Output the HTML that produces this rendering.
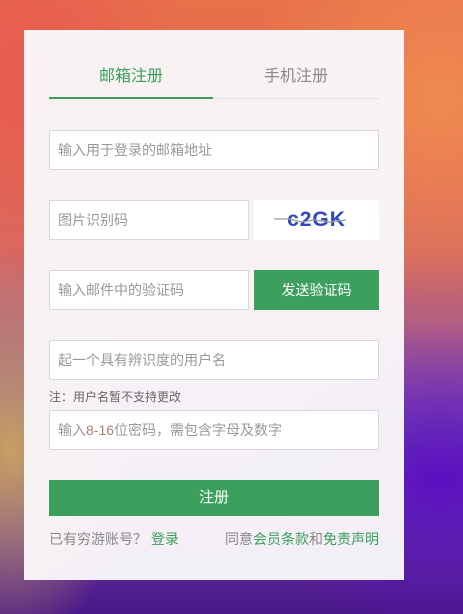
<!DOCTYPE html><html><head><meta charset="utf-8"><style>
*{margin:0;padding:0;box-sizing:border-box}
body{width:463px;height:614px;overflow:hidden;position:relative;font-family:"Liberation Sans","Noto Sans CJK SC",sans-serif;
background:
radial-gradient(ellipse 200px 160px at 440px 480px,#5a10c0 0%,rgba(90,16,192,0) 100%),
radial-gradient(ellipse 160px 200px at 30px 80px,#e85a50 0%,rgba(232,90,80,0) 100%),
radial-gradient(ellipse 200px 200px at 440px 100px,#f08a50 0%,rgba(240,138,80,0) 100%),
radial-gradient(ellipse 120px 200px at 10px 450px,#c8a060 0%,rgba(200,160,96,0) 100%),
linear-gradient(180deg,#e8704a 0%,#d86a60 40%,#8050b0 70%,#4a1888 100%);}
.p{position:absolute;left:24px;top:30px;width:380px;height:550px;background:rgba(250,248,250,.96)}
.t{position:absolute;top:62px;font-size:16px}
.line{position:absolute;left:49px;top:98px;width:330px;height:1px;background:#e4e4e4}
.act{position:absolute;left:49px;top:97px;width:164px;height:2px;background:#3a9e5a}
.in{position:absolute;left:49px;width:330px;height:40px;border:1px solid #d8d8d8;background:#fff;font-size:14px;color:#999;padding-left:8px;line-height:38px}
.btn{position:absolute;background:#3d9f5e;color:#fff;font-size:14px;text-align:center}
.g{color:#3a9e5a}
</style></head><body>
<div class="p"></div>
<div class="t g" style="left:99px">邮箱注册</div>
<div class="t" style="left:264px;color:#888">手机注册</div>
<div class="line"></div><div class="act"></div>
<div class="in" style="top:130px">输入用于登录的邮箱地址</div>
<div class="in" style="top:200px;width:200px">图片识别码</div>
<div style="position:absolute;left:254px;top:200px;width:125px;height:40px;background:#fff;font:bold 21px 'Liberation Sans',sans-serif;color:#3048c0;text-align:center;line-height:40px;letter-spacing:1px">c2GK
<svg style="position:absolute;left:0;top:0" width="125" height="40"><path d="M20 19 L35 19 L48 22 L60 20 L75 22 L92 20" stroke="#999" stroke-width="1.2" fill="none"/></svg></div>
<div class="in" style="top:270px;width:200px">输入邮件中的验证码</div>
<div class="btn" style="left:254px;top:270px;width:125px;height:40px;line-height:40px">发送验证码</div>
<div class="in" style="top:340px">起一个具有辨识度的用户名</div>
<div style="position:absolute;left:49px;top:388px;font-size:12px;color:#666">注：用户名暂不支持更改</div>
<div class="in" style="top:410px">输入<b style="color:#b08070;font-weight:normal">8-16</b>位密码，需包含字母及数字</div>
<div class="btn" style="left:49px;top:480px;width:330px;height:36px;line-height:36px;font-size:15px">注册</div>
<div style="position:absolute;left:49px;top:529px;font-size:14px;color:#888">已有穷游账号？ <span class="g">登录</span></div>
<div style="position:absolute;right:84px;top:529px;font-size:14px;color:#888">同意<span class="g">会员条款</span>和<span class="g">免责声明</span></div>
</body></html>
